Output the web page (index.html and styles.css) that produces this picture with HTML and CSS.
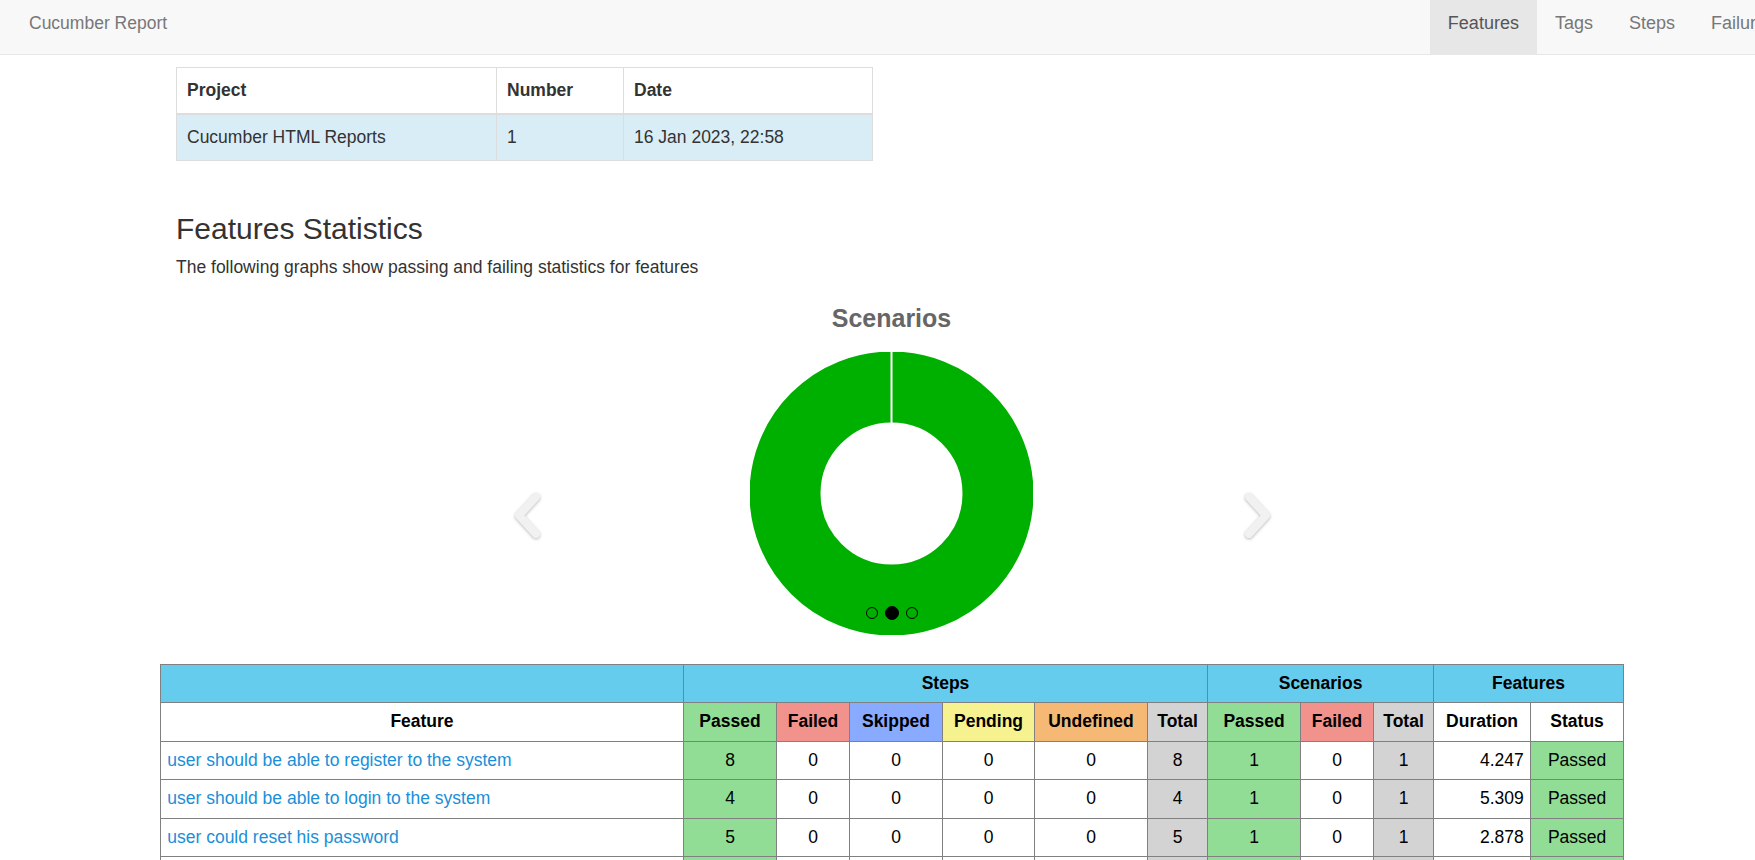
FILE: index.html
```html
<!DOCTYPE html>
<html lang="en">
<head>
<meta charset="utf-8">
<title>Cucumber Report</title>
<link rel="stylesheet" href="styles.css">
</head>
<body>
<nav class="navbar">
  <a class="brand" href="#">Cucumber Report</a>
  <ul class="nav">
    <li class="active"><a href="#">Features</a></li>
    <li><a href="#">Tags</a></li>
    <li><a href="#">Steps</a></li>
    <li><a href="#">Failures</a></li>
  </ul>
</nav>
<main class="container">
  <table class="info-table">
    <colgroup><col class="c-project"><col class="c-number"><col class="c-date"></colgroup>
    <thead>
      <tr><th>Project</th><th>Number</th><th>Date</th></tr>
    </thead>
    <tbody>
      <tr class="info"><td>Cucumber HTML Reports</td><td>1</td><td>16 Jan 2023, 22:58</td></tr>
    </tbody>
  </table>

  <h2 class="title">Features Statistics</h2>
  <p class="lead-text">The following graphs show passing and failing statistics for features</p>

  <div class="carousel">
    <div class="chart-title">Scenarios</div>
    <svg class="donut" width="283" height="283" viewBox="0 0 283 283">
      <circle cx="141.5" cy="141.5" r="106.5" fill="none" stroke="#00b000" stroke-width="71"/>
      <line x1="141.5" y1="0" x2="141.5" y2="72" stroke="#ffffff" stroke-width="2"/>
    </svg>
    <a class="control control-left" href="#">
      <svg width="34" height="49" viewBox="0 0 34 49"><polyline points="26,6 9,24.5 26,43" fill="none" stroke="#f1f1f1" stroke-width="8" stroke-linecap="round" stroke-linejoin="round"/></svg>
    </a>
    <a class="control control-right" href="#">
      <svg width="34" height="49" viewBox="0 0 34 49"><polyline points="8,6 25,24.5 8,43" fill="none" stroke="#f1f1f1" stroke-width="8" stroke-linecap="round" stroke-linejoin="round"/></svg>
    </a>
    <ol class="indicators">
      <li></li>
      <li class="active"></li>
      <li></li>
    </ol>
  </div>

  <table class="stats-table">
    <colgroup>
      <col class="w-feature"><col class="w-93"><col class="w-73"><col class="w-93"><col class="w-92"><col class="w-113"><col class="w-60">
      <col class="w-93"><col class="w-73"><col class="w-60"><col class="w-97"><col class="w-93">
    </colgroup>
    <thead>
      <tr class="group">
        <th></th>
        <th colspan="6">Steps</th>
        <th colspan="3">Scenarios</th>
        <th colspan="2">Features</th>
      </tr>
      <tr class="header">
        <th>Feature</th>
        <th class="passed">Passed</th>
        <th class="failed">Failed</th>
        <th class="skipped">Skipped</th>
        <th class="pending">Pending</th>
        <th class="undefined">Undefined</th>
        <th class="total">Total</th>
        <th class="passed">Passed</th>
        <th class="failed">Failed</th>
        <th class="total">Total</th>
        <th>Duration</th>
        <th>Status</th>
      </tr>
    </thead>
    <tbody>
      <tr>
        <td class="tagname"><a href="#">user should be able to register to the system</a></td>
        <td class="passed">8</td><td>0</td><td>0</td><td>0</td><td>0</td><td class="total">8</td>
        <td class="passed">1</td><td>0</td><td class="total">1</td>
        <td class="duration">4.247</td><td class="passed">Passed</td>
      </tr>
      <tr>
        <td class="tagname"><a href="#">user should be able to login to the system</a></td>
        <td class="passed">4</td><td>0</td><td>0</td><td>0</td><td>0</td><td class="total">4</td>
        <td class="passed">1</td><td>0</td><td class="total">1</td>
        <td class="duration">5.309</td><td class="passed">Passed</td>
      </tr>
      <tr>
        <td class="tagname"><a href="#">user could reset his password</a></td>
        <td class="passed">5</td><td>0</td><td>0</td><td>0</td><td>0</td><td class="total">5</td>
        <td class="passed">1</td><td>0</td><td class="total">1</td>
        <td class="duration">2.878</td><td class="passed">Passed</td>
      </tr>
    </tbody>
    <tfoot>
      <tr>
        <td>3</td>
        <td class="passed">17</td><td>0</td><td>0</td><td>0</td><td>0</td><td class="total">17</td>
        <td class="passed">3</td><td>0</td><td class="total">3</td>
        <td class="duration">12.434</td><td class="passed">100.00%</td>
      </tr>
    </tfoot>
  </table>
</main>
</body>
</html>
```

FILE: styles.css
```css
html {
  scrollbar-width: none;
}
html::-webkit-scrollbar {
  display: none;
}
body {
  margin: 0;
  overflow-x: hidden;
  font-family: "Liberation Sans", Arial, Helvetica, sans-serif;
  font-size: 17.5px;
  line-height: 25px;
  color: #333;
  background: #fff;
}
a {
  text-decoration: none;
}

/* Navbar */
.navbar {
  display: flex;
  align-items: flex-start;
  height: 54px;
  background: #f8f8f8;
  border-bottom: 1px solid #e7e7e7;
}
.brand {
  padding: 13px 0 0 29px;
  line-height: 20px;
  color: #777;
}
.nav {
  display: flex;
  list-style: none;
  margin: 0 -38px 0 auto;
  padding: 0;
  flex-shrink: 0;
  font-size: 18px;
}
.nav a {
  display: block;
  height: 54px;
  box-sizing: border-box;
  padding: 13px 18px 0;
  line-height: 20px;
  color: #777;
}
.nav .active a {
  background: #e7e7e7;
  color: #555;
}

/* Container */
.container {
  width: 1463px;
  margin: 0 0 0 160px;
}

/* Info table */
.info-table {
  margin: 12px 0 0 16px;
  width: 696px;
  border-collapse: collapse;
  table-layout: fixed;
  border: 1px solid #ddd;
}
.c-project { width: 320px; }
.c-number { width: 127px; }
.c-date { width: 249px; }
.info-table th,
.info-table td {
  padding: 10px;
  text-align: left;
  border: 1px solid #ddd;
  line-height: 25px;
}
.info-table th {
  font-weight: bold;
  border-bottom: 2px solid #ddd;
}
.info-table .info td {
  background: #d9edf7;
}

/* Heading */
.title {
  margin: 51px 0 10px 16px;
  font-size: 30px;
  line-height: 33px;
  font-weight: 500;
  color: #333;
}
.lead-text {
  margin: 0 0 0 16px;
}

/* Carousel / chart */
.carousel {
  position: relative;
  margin-top: 24px;
}
.chart-title {
  text-align: center;
  font-size: 25px;
  line-height: 29px;
  font-weight: bold;
  color: #666;
}
.donut {
  display: block;
  margin: 19px auto 0;
}
.control {
  position: absolute;
  top: 187px;
  display: block;
  width: 34px;
  height: 49px;
}
.control svg {
  display: block;
  filter: drop-shadow(0 1px 1.5px rgba(0, 0, 0, 0.28));
}
.control-left { left: 350px; }
.control-right { right: 348px; }
.indicators {
  position: absolute;
  top: 302px;
  left: 0;
  right: 0;
  height: 14px;
  margin: 0;
  padding: 0;
  list-style: none;
  display: flex;
  justify-content: center;
  align-items: center;
}
.indicators li {
  width: 10px;
  height: 10px;
  margin: 0 3.5px;
  border: 1px solid #000;
  border-radius: 50%;
}
.indicators li.active {
  width: 12px;
  height: 12px;
  background: #000;
}

/* Stats table */
.stats-table {
  margin-top: 28.5px;
  width: 1463px;
  border-collapse: collapse;
  table-layout: fixed;
  color: #000;
}
.w-feature { width: 523px; }
.w-93 { width: 93px; }
.w-92 { width: 92px; }
.w-73 { width: 73px; }
.w-113 { width: 113px; }
.w-60 { width: 60px; }
.w-97 { width: 97px; }
.stats-table th,
.stats-table td {
  border: 1px solid #808080;
  padding: 6.25px;
  line-height: 25px;
  text-align: center;
  white-space: nowrap;
  overflow: hidden;
}
.stats-table th {
  font-weight: bold;
}
.stats-table .group th {
  background: #66ccee;
}
.stats-table td.tagname {
  text-align: left;
}
.stats-table td.tagname a {
  color: #1a8fd8;
}
.stats-table td.duration {
  text-align: right;
}
.passed { background: #92dd96; }
.failed { background: #f2928c; }
.skipped { background: #88aaff; }
.pending { background: #f5f28f; }
.undefined { background: #f5b975; }
.total { background: #d3d3d3; }
```
